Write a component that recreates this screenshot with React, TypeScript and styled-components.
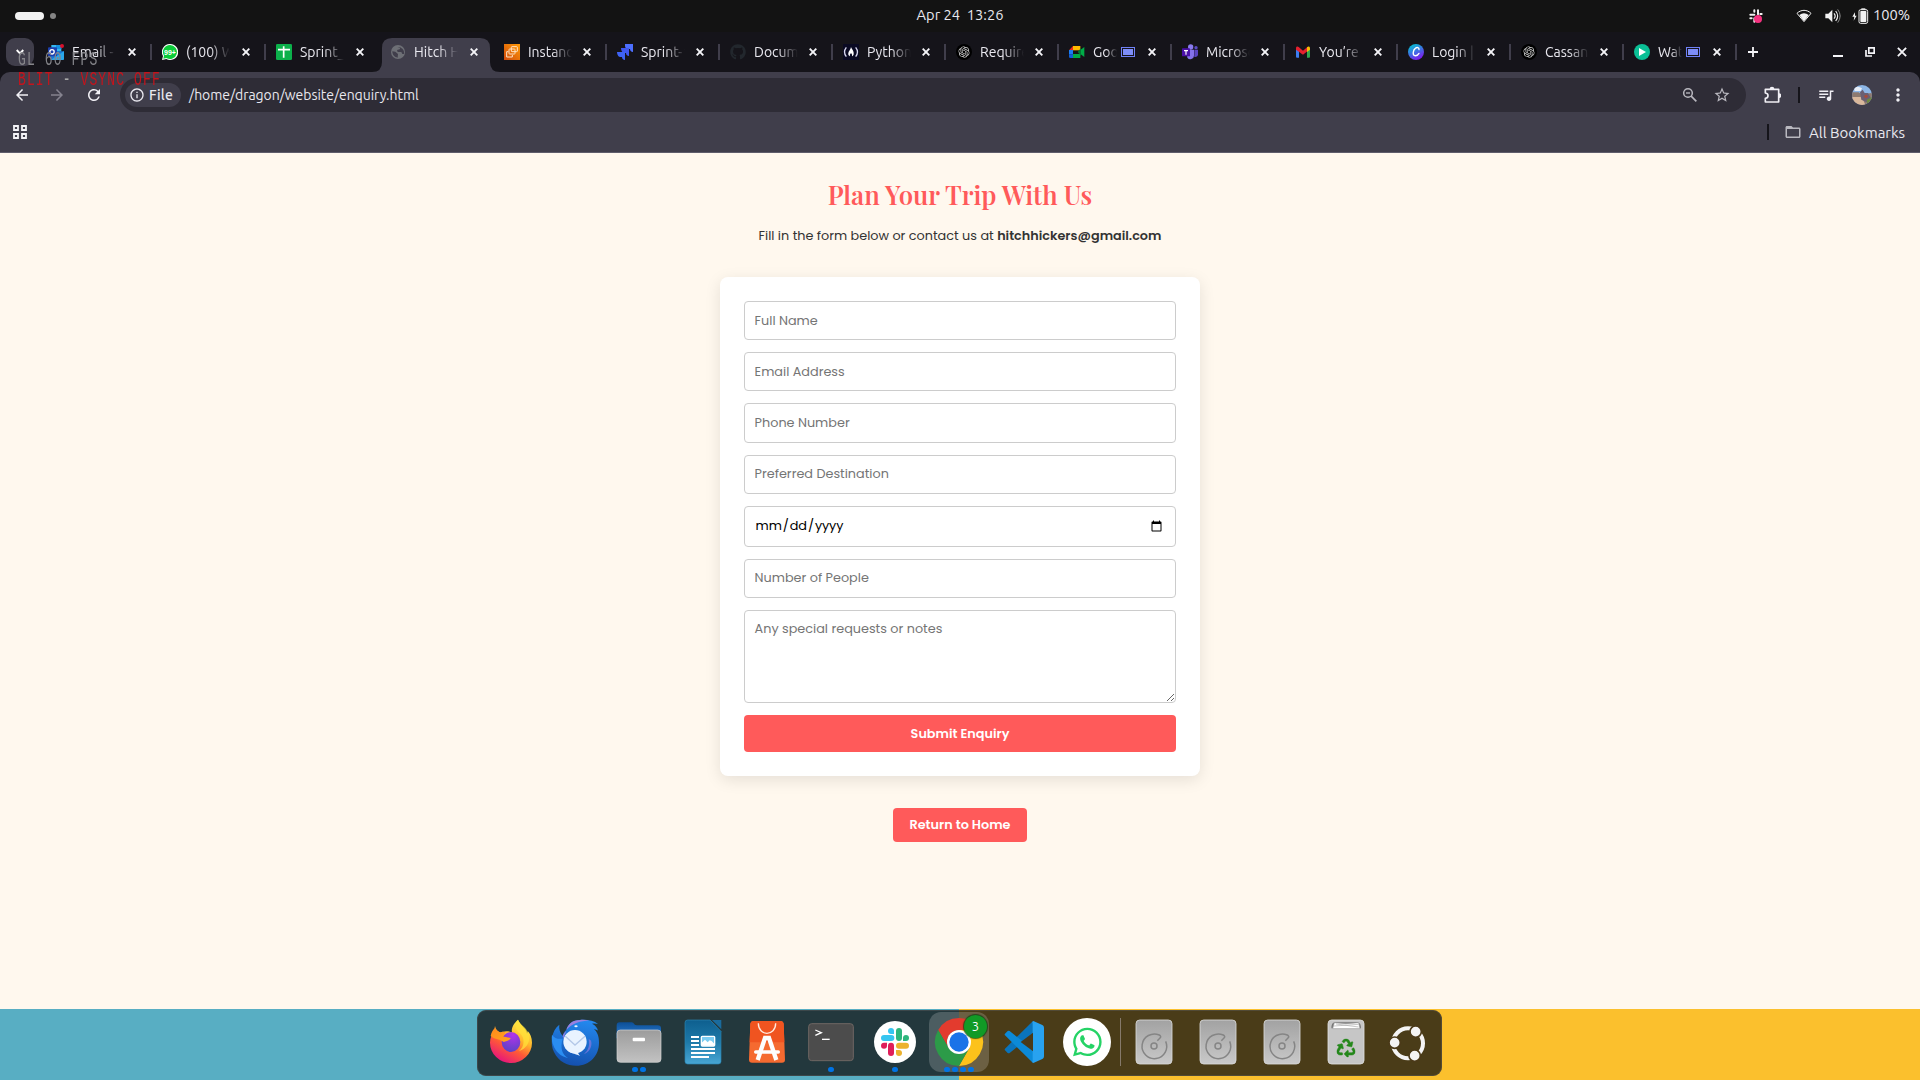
import React from "react";
import styled, { createGlobalStyle } from "styled-components";
import {
  MdArrowBack,
  MdArrowForward,
  MdRefresh,
  MdStarOutline,
  MdMoreVert,
  MdQueueMusic,
  MdInfoOutline,
  MdFolderOpen,
} from "react-icons/md";
import { FaGithub, FaWhatsapp, FaRecycle } from "react-icons/fa";
import { SiOpenai } from "react-icons/si";

const c = {
  panel: "#131313",
  strip: "#15141a",
  toolbar: "#403e4b",
  field: "#2e2c36",
  text: "#e9e8ef",
  page: "#fff8ee",
  coral: "#ff5a5a",
  teal: "#58aec3",
  yellow: "#fbc02d",
  dot: "#0073e5",
};

const uiFont = `Ubuntu, "Noto Sans", "Open Sans", sans-serif`;
const bodyFont = `Poppins, Inter, "Open Sans", sans-serif`;

const GlobalStyle = createGlobalStyle`
  * { box-sizing: border-box; }
  body { margin: 0; overflow: hidden; background: ${c.page}; }
  svg { display: block; flex: none; }
`;

const Screen = styled.div`
  width: 1920px;
  height: 1080px;
  display: flex;
  flex-direction: column;
  position: relative;
  font-family: ${uiFont};
  color: ${c.text};
`;

/* ---------- desktop panel ---------- */

const TopBar = styled.header`
  height: 32px;
  background: ${c.panel};
  display: grid;
  grid-template-columns: 1fr auto 1fr;
  align-items: center;
`;
const Workspaces = styled.div`
  display: flex;
  align-items: center;
  gap: 6px;
  padding-left: 15px;
`;
const ActiveWorkspace = styled.span`
  width: 29px;
  height: 8px;
  border-radius: 4px;
  background: #f2f2f2;
`;
const IdleWorkspace = styled.span`
  width: 6px;
  height: 6px;
  border-radius: 50%;
  background: #858585;
`;
const Clock = styled.div`
  font-size: 14.67px;
  line-height: 20px;
  white-space: pre;
  padding-bottom: 2px;
`;
const Status = styled.div`
  display: flex;
  justify-content: flex-end;
  align-items: center;
  height: 32px;
  padding-right: 11px;
`;
const TrayIcon = styled.span<{ $gap: number }>`
  display: flex;
  margin-right: ${(p) => p.$gap}px;
`;
const Percent = styled.span`
  width: 36px;
  font-size: 14.67px;
  line-height: 18px;
  padding-bottom: 2px;
  white-space: nowrap;
`;

/* ---------- tab strip ---------- */

const Browser = styled.div`
  background: ${c.strip};
`;
const Strip = styled.div`
  height: 40px;
  display: flex;
  align-items: center;
`;
const TabSearch = styled.button`
  width: 28px;
  height: 28px;
  margin: 0 4px 0 6px;
  padding: 0;
  border: 0;
  border-radius: 9px;
  background: ${c.toolbar};
  display: grid;
  place-items: center;
`;
const Tab = styled.div<{ $w: number; $line: boolean }>`
  width: ${(p) => p.$w}px;
  height: 40px;
  flex: none;
  display: flex;
  align-items: center;
  padding-left: 10px;
  position: relative;
  isolation: isolate;
  &::after {
    content: "";
    width: 2px;
    height: 16px;
    background: ${(p) => (p.$line ? c.toolbar : "transparent")};
  }
`;
const ActiveShape = styled.svg`
  position: absolute;
  left: -8px;
  bottom: 0;
  z-index: -1;
`;
const TabTitle = styled.span<{ $w: number }>`
  width: ${(p) => p.$w}px;
  margin-left: 8px;
  overflow: hidden;
  white-space: nowrap;
  font-size: 14px;
  line-height: 20px;
  -webkit-mask-image: linear-gradient(90deg, #000 55%, transparent 100%);
  mask-image: linear-gradient(90deg, #000 55%, transparent 100%);
`;
const TabShare = styled.span`
  width: 14px;
  height: 10px;
  margin-left: 4px;
  border: 1px solid #6f80f5;
  padding: 2px;
  &::before {
    content: "";
    display: block;
    height: 4px;
    background: #7d8df8;
    outline: 0.5px solid #7d8df8;
  }
`;
const TabClose = styled.span`
  margin-left: auto;
  margin-right: 14px;
  display: flex;
`;
const NewTab = styled.span`
  margin-left: 11px;
  display: flex;
`;
const WindowControls = styled.div`
  margin-left: auto;
  display: flex;
  align-items: center;
  gap: 22px;
  padding-right: 13px;
`;

/* ---------- toolbar ---------- */

const Toolbar = styled.div`
  background: ${c.toolbar};
  border-radius: 10px 10px 0 0;
  border-bottom: 1px solid #5f5d6b;
  height: 81px;
`;
const NavRow = styled.div`
  height: 46px;
  display: flex;
  align-items: center;
  padding-left: 13px;
`;
const NavButton = styled.span<{ $dim?: boolean; $gap: number; $before?: number }>`
  display: flex;
  color: ${(p) => (p.$dim ? "#85838f" : "#f1f0f5")};
  margin-left: ${(p) => p.$before ?? 0}px;
  margin-right: ${(p) => p.$gap}px;
`;
const AddressBar = styled.div`
  width: 1626px;
  height: 34px;
  border-radius: 17px;
  background: ${c.field};
  display: flex;
  align-items: center;
  padding: 0 15px 0 5px;
`;
const FileChip = styled.span`
  width: 56px;
  height: 24px;
  border-radius: 12px;
  background: ${c.toolbar};
  display: flex;
  align-items: center;
  gap: 4px;
  padding-left: 4px;
  font-size: 14px;
  font-weight: 500;
  letter-spacing: 0.3px;
`;
const Path = styled.span`
  margin-left: 8px;
  font-size: 14px;
  letter-spacing: -0.04px;
`;
const AddressActions = styled.span`
  margin-left: auto;
  display: flex;
  align-items: center;
  gap: 15px;
  color: #b9b8bf;
`;
const Divider = styled.span<{ $gap: number }>`
  width: 2px;
  height: 16px;
  background: ${c.strip};
  margin-right: ${(p) => p.$gap}px;
`;
const Avatar = styled.span`
  width: 20px;
  height: 20px;
  border-radius: 50%;
  overflow: hidden;
  margin-right: 26px;
`;
const BookmarkRow = styled.div`
  height: 28px;
  display: flex;
  align-items: center;
  padding: 0 15px 0 13px;
`;
const AllBookmarks = styled.div`
  margin-left: auto;
  display: flex;
  align-items: center;
  font-size: 15px;
  gap: 7px;
`;
const BookmarkLabel = styled.span`
  width: 96px;
  white-space: nowrap;
`;

/* ---------- page ---------- */

const Page = styled.main`
  height: 856px;
  background: ${c.page};
  display: flex;
  flex-direction: column;
  align-items: center;
  padding-top: 24px;
  font-family: ${bodyFont};
`;
const Heading = styled.h2`
  margin: 0;
  height: 38px;
  font-family: "Playfair Display", "Liberation Serif", serif;
  font-weight: 600;
  font-size: 25.6px;
  line-height: 34px;
  color: ${c.coral};
`;
const Lead = styled.p`
  margin: 11px 0 0;
  height: 19px;
  font-size: 12.8px;
  line-height: 19px;
  color: #333;
`;
const Email = styled.strong`
  font-weight: 600;
`;
const Card = styled.form`
  width: 480px;
  margin: 32px 0 0;
  padding: 24px;
  border-radius: 8px;
  background: #fff;
  box-shadow: 0 4px 16px rgba(0, 0, 0, 0.1);
  display: flex;
  flex-direction: column;
  gap: 12px;
`;
const Input = styled.input`
  width: 100%;
  height: ${(p) => (p.type === "date" ? 41 : 39.2)}px;
  padding: 0 9.6px;
  border: 1px solid #ccc;
  border-radius: 4px;
  background: #fff;
  font-family: ${bodyFont};
  font-size: 12.8px;
  letter-spacing: ${(p) => (p.type === "date" ? "-0.1px" : "normal")};
  color: #000;
  outline: none;
  &::placeholder { color: #757575; }
  &::-webkit-calendar-picker-indicator { width: 13.5px; height: 13.5px; }
`;
const Notes = styled.textarea`
  width: 100%;
  height: 93px;
  padding: 8px 9.6px;
  border: 1px solid #ccc;
  border-radius: 4px;
  background: #fff;
  font-family: ${bodyFont};
  font-size: 12.8px;
  line-height: 19px;
  resize: vertical;
  outline: none;
  &::placeholder { color: #757575; }
`;
const Submit = styled.button`
  height: 37px;
  border: 0;
  padding: 1px 0 0;
  border-radius: 4px;
  background: ${c.coral};
  color: #fff;
  font-family: ${bodyFont};
  font-weight: 600;
  font-size: 12.8px;
`;
const HomeLink = styled.a`
  width: 134px;
  height: 34px;
  margin-top: 32px;
  border-radius: 4px;
  background: ${c.coral};
  color: #fff;
  font-weight: 600;
  font-size: 12.8px;
  line-height: 34px;
  text-align: center;
  white-space: nowrap;
`;

/* ---------- dock ---------- */

const Desktop = styled.footer`
  height: 71px;
  display: flex;
  justify-content: center;
  align-items: flex-start;
  padding-top: 1px;
  background: linear-gradient(90deg, ${c.teal} 959px, ${c.yellow} 959px);
`;
const Dock = styled.div`
  width: 965px;
  height: 66px;
  margin-right: 1px;
  border-radius: 9px;
  background: rgba(19, 19, 19, 0.76);
  box-shadow: inset 0 0 0 1px rgba(90, 90, 90, 0.45);
  display: flex;
  padding-left: 2px;
`;
const DockItem = styled.div`
  width: 64px;
  height: 66px;
  position: relative;
`;
const DockDivider = styled.span`
  width: 1px;
  height: 48px;
  margin: 8px 1px;
  background: #85796a;
`;
const Dots = styled.span`
  position: absolute;
  left: 0;
  right: 0;
  top: 56.5px;
  display: flex;
  justify-content: center;
  gap: 2.5px;
`;
const Dot = styled.i`
  width: 5.6px;
  height: 5.6px;
  border-radius: 50%;
  background: ${c.dot};
`;
const Badge = styled.span`
  position: absolute;
  left: 37px;
  top: 5px;
  width: 23px;
  height: 23px;
  border-radius: 50%;
  background: #119a26;
  box-shadow: 0 0 1px 1px rgba(5, 60, 10, 0.7);
  color: #fff;
  font-size: 13px;
  line-height: 23px;
  text-align: center;
`;

/* ---------- overlay ---------- */

const Overlay = styled.div`
  position: absolute;
  left: 18px;
  top: 50px;
  font-family: "Liberation Mono", monospace;
  font-size: 21px;
  line-height: 20px;
  letter-spacing: 1.8px;
  white-space: pre;
  transform: scaleX(0.62);
  transform-origin: 0 0;
`;
const OverlayLine = styled.div<{ $color: string }>`
  color: ${(p) => p.$color};
`;
const OverlayDash = styled.span`
  color: #a8a8a8;
`;

/* ---------- small drawings ---------- */

const CloseX = ({ s = 8, w = 1.9 }: { s?: number; w?: number }) => (
  <svg width={s} height={s} viewBox="0 0 8 8">
    <path d="M.7.7l6.6 6.6M7.3.7L.7 7.3" stroke="#f4f4f8" strokeWidth={w} />
  </svg>
);

const ZoomOut = () => (
  <svg width="16" height="16" viewBox="0 0 48 48" fill="none" stroke="currentColor">
    <circle cx="18" cy="18" r="13" strokeWidth="4.500" />
    <path d="M27.500 27.500L43 43" strokeWidth="5" />
    <path d="M12 18h12" strokeWidth="4" />
  </svg>
);

const Puzzle = () => (
  <svg width="18" height="18" viewBox="0 0 54 54">
    <path
      d="M7 10h40v38H7V37q8-1 8-8t-8-8z"
      fill="none"
      stroke="currentColor"
      strokeWidth="5"
      strokeLinejoin="round"
    />
    <path d="M20 9a7 7 0 0 1 14 0zM48 22a7 7 0 0 1 0 14z" fill="currentColor" />
  </svg>
);

const Fav = ({ children }: { children: React.ReactNode }) => (
  <svg width="16" height="16" viewBox="0 0 48 48">
    {children}
  </svg>
);

const favicons: Record<string, React.ReactNode> = {
  outlook: (
    <Fav>
      <path d="M10 3h30v20H10z" fill="#35b8f1" />
      <path d="M24 3h16v12H24z" fill="#1490df" />
      <path d="M7 22h41v22a4 4 0 0 1-4 4H11a4 4 0 0 1-4-4z" fill="#1a77d4" />
      <path d="M48 22L8 48h36a4 4 0 0 0 4-4z" fill="#2aa7ea" />
      <rect x="0" y="10" width="27" height="27" rx="3" fill="#1c3fae" />
      <circle cx="12" cy="23.500" r="6.500" fill="none" stroke="#fff" strokeWidth="4" />
      <circle cx="42" cy="6" r="6" fill="#d9102b" />
    </Fav>
  ),
  whatsapp: (
    <Fav>
      <path d="M24 0a24 24 0 1 1-11 45L0 48l3-12A24 24 0 0 1 24 0z" fill="#fff" />
      <path d="M24 3a21 21 0 1 1-11 39l-9 2 2-9A21 21 0 0 1 24 3z" fill="#0ccb3a" />
      <text x="24" y="32" textAnchor="middle" fontSize="21" fontWeight="700" fill="#fff" fontFamily="Liberation Sans, sans-serif">
        99+
      </text>
    </Fav>
  ),
  sheets: (
    <Fav>
      <rect width="48" height="48" rx="4" fill="#0cb14b" />
      <path d="M6 17h36M23 7v34" stroke="#fff" strokeWidth="5" />
    </Fav>
  ),
  globe: (
    <Fav>
      <circle cx="24" cy="24" r="21" fill="#6d6f75" />
      <path d="M7 22l9 1 8 7-1 11C13 40 7 32 7 22zM22 10l10-1-3 7-8 2 2 6 11 0 3 6 5 0q2-14-10-19z" fill="#403e4b" />
    </Fav>
  ),
  ec2: (
    <Fav>
      <defs>
        <linearGradient id="ec2" x1="0" y1="1" x2="1" y2="0">
          <stop stopColor="#d14a0c" />
          <stop offset="1" stopColor="#ff9a06" />
        </linearGradient>
      </defs>
      <rect width="48" height="48" fill="url(#ec2)" />
      <g fill="none" stroke="#ffe3c4" strokeWidth="3">
        <rect x="22" y="8" width="18" height="15" rx="2" />
        <rect x="15" y="15" width="18" height="15" rx="2" />
        <path d="M13 23H8v16h17v-6" />
      </g>
    </Fav>
  ),
  jira: (
    <Fav>
      <path d="M24 0h24v24c-6 0-9-4-9-9h-6c-5 0-9-4-9-9z" fill="#4c6fff" />
      <path d="M12 12h24v24c-6 0-9-4-9-9h-6c-5 0-9-9-9-15z" fill="#3f57f0" />
      <path d="M0 24h24v24c-6 0-9-4-9-9h-6c-5 0-9-9-9-15z" fill="#3e63f5" />
    </Fav>
  ),
  github: <FaGithub size={16} color="#22272d" />,
  fcc: (
    <Fav>
      <rect width="48" height="48" fill="#0a0a23" />
      <path d="M10 10C3 19 3 29 10 38M38 10c7 9 7 19 0 28" fill="none" stroke="#d8d8f0" strokeWidth="4" />
      <path d="M24 9c2 7 9 11 8 20 0 4-2 6-5 8 1-5-1-8-3-9-3 2-4 5-3 9-4-2-6-5-5-10 1-6 7-10 8-18z" fill="#fff" />
    </Fav>
  ),
  openai: (
    <Fav>
      <circle cx="24" cy="24" r="24" fill="#000" />
      <SiOpenai x={7} y={7} size={34} color="#d9d9d9" />
    </Fav>
  ),
  meet: (
    <Fav>
      <path d="M12 6v13H0z" fill="#ea2a1d" />
      <path d="M12 6h22v13H12z" fill="#ffba00" />
      <path d="M0 18h12v13H0z" fill="#1b7cf2" />
      <path d="M0 31h12v11H4a4 4 0 0 1-4-4z" fill="#0f5fd8" />
      <path d="M12 30h22v12H12z" fill="#00ac47" />
      <path d="M34 18L46 9v30L34 30z" fill="#00ac47" />
      <path d="M26 24l10-12v24z" fill="#007a32" />
    </Fav>
  ),
  teams: (
    <Fav>
      <circle cx="26" cy="9" r="8" fill="#8a7bf0" />
      <circle cx="42" cy="11" r="5" fill="#5b4bc4" />
      <path d="M14 17h22v18a11 11 0 0 1-20 6z" fill="#8472ea" />
      <path d="M37 17h11v14c0 7-5 9-11 8z" fill="#5a44c2" />
      <rect x="0" y="13" width="24" height="24" rx="2" fill="#4a10a8" />
      <path d="M6 20h12M12 20v12" stroke="#fff" strokeWidth="3.500" />
    </Fav>
  ),
  gmail: (
    <Fav>
      <path d="M3 12h9v29H6a3 3 0 0 1-3-3z" fill="#3b7cf0" />
      <path d="M36 12h9v26a3 3 0 0 1-3 3h-6z" fill="#2ea84f" />
      <path d="M3 12c0-5 5-6 8-3l13 11L37 9v13L24 32 3 17z" fill="#e5202e" />
      <path d="M36 10c4-4 9-2 9 3v4l-9 7z" fill="#fbbc04" />
    </Fav>
  ),
  canva: (
    <Fav>
      <defs>
        <linearGradient id="canva" x1="0.200" y1="0" x2="0.700" y2="1">
          <stop stopColor="#00c6d0" />
          <stop offset=".5" stopColor="#3f6fe4" />
          <stop offset="1" stopColor="#8410ee" />
        </linearGradient>
      </defs>
      <circle cx="24" cy="24" r="24" fill="url(#canva)" />
      <path d="M33 17c1-7-6-8-11-4-7 5-9 20-2 22 5 1 10-2 13-7" fill="none" stroke="#fff" strokeWidth="4" strokeLinecap="round" />
    </Fav>
  ),
  play: (
    <Fav>
      <circle cx="24" cy="24" r="24" fill="#0abf95" />
      <path d="M15 12l21 12-21 12z" fill="#fff" />
    </Fav>
  ),
};

interface TabInfo {
  icon: string;
  title: string;
  active?: boolean;
  share?: boolean;
}

const tabs: TabInfo[] = [
  { icon: "outlook", title: "Email - D" },
  { icon: "whatsapp", title: "(100) Wh" },
  { icon: "sheets", title: "Sprint_B" },
  { icon: "globe", title: "Hitch Hi", active: true },
  { icon: "ec2", title: "Instance" },
  { icon: "jira", title: "Sprint-1" },
  { icon: "github", title: "Docume" },
  { icon: "fcc", title: "Python P" },
  { icon: "openai", title: "Require" },
  { icon: "meet", title: "Goog", share: true },
  { icon: "teams", title: "Microso" },
  { icon: "gmail", title: "You’re in" },
  { icon: "canva", title: "Login | " },
  { icon: "openai", title: "Cassand" },
  { icon: "play", title: "Wat", share: true },
];

/* ---------- dock drawings ---------- */

const DockSvg = ({ x, children }: { x: number; children: React.ReactNode }) => (
  <svg width="64" height="66" viewBox={`${x} 30 192 198`}>
    {children}
  </svg>
);

const Firefox = () => (
  <DockSvg x={27}>
    <defs>
      <linearGradient id="ffBody" x1=".8" y1=".1" x2=".3" y2="1">
        <stop stopColor="#fff04a" />
        <stop offset=".35" stopColor="#ffb52b" />
        <stop offset=".62" stopColor="#ff5a36" />
        <stop offset="1" stopColor="#e6127f" />
      </linearGradient>
      <radialGradient id="ffGlobe" cx=".6" cy=".15" r=".9">
        <stop stopColor="#b233ea" />
        <stop offset="1" stopColor="#5843c4" />
      </radialGradient>
      <linearGradient id="ffFace" x1="0" y1="0" x2="1" y2="1">
        <stop stopColor="#ff8a1c" />
        <stop offset="1" stopColor="#ffa41e" />
      </linearGradient>
    </defs>
    <path
      d="M75 78c-2 8-1 12 0 14-10 10-15 22-15 36a63 61 0 0 0 126 0c0-16-6-28-13-35 0 5-1 7-2 8-3-17-18-22-27-42-7 5-22 23-18 38-17-7-30-2-35 1-7-4-14-9-16-20z"
      fill="url(#ffBody)"
    />
    <ellipse cx="123" cy="126" rx="28" ry="30" fill="url(#ffGlobe)" />
    <path d="M62 108c2-12 8-20 13-24 4 8 10 11 16 13 5-2 10-2 14 0 0 5-3 9-7 12 6 2 14 3 24 5-3 9-15 8-21 12-4-2-10-6-18-8-7-2-14-4-21-10z" fill="url(#ffFace)" />
    <path d="M144 59c-14 16-4 35 7 42 14 12 13 40-4 52 26-7 40-37 24-60-3-12-20-17-27-34z" fill="#ffe03a" opacity=".75" />
  </DockSvg>
);

const Thunderbird = () => (
  <DockSvg x={219}>
    <defs>
      <linearGradient id="tb" x1=".6" y1="0" x2=".4" y2="1">
        <stop stopColor="#2388ee" />
        <stop offset="1" stopColor="#1450ae" />
      </linearGradient>
    </defs>
    <path
      d="M268 74C244 92 240 130 252 156 266 186 292 197 318 197c42 0 69-31 69-69 0-20-5-32-15-40 4 0 8 2 12 4-2-10-8-16-18-21 6-1 12-1 18 1-12-10-34-14-54-12-22 0-36 12-41 30-5 4-9 10-11 18-8-10-12-22-10-34z"
      fill="url(#tb)"
    />
    <path d="M246 104c-2 12 0 22 4 32 6 18 22 34 44 38-18-12-24-30-16-58-14 2-26-2-32-12z" fill="#2a8df2" />
    <path d="M289 90c5-18 19-30 41-30 10-1 20 0 28 2-26 0-50 6-69 28z" fill="#9a80e0" />
    <path d="M278 108c2-6 6-12 11-15-3 8-7 14-9 24z" fill="#8f7ade" />
    <circle cx="315" cy="125" r="35" fill="#e9f3ff" />
    <path d="M286 109l29 26 30-26" fill="none" stroke="#b4c8e8" strokeWidth="4" />
    <path d="M290 148c10 14 24 12 40 20-8-10-8-14-2-20z" fill="#e9f3ff" />
    <path d="M356 118c4 20-2 34-14 44 16-6 24-20 22-36-1-5-4-8-8-8z" fill="#7a78dc" opacity=".8" />
    <ellipse cx="318" cy="79" rx="5" ry="3" fill="#e8f4ff" />
  </DockSvg>
);

const Files = () => (
  <DockSvg x={411}>
    <defs>
      <linearGradient id="fi" x1="0" y1="0" x2="0" y2="1">
        <stop stopColor="#9c9c9c" />
        <stop offset="1" stopColor="#c2c2c2" />
      </linearGradient>
      <linearGradient id="fb" x1="0" y1="0" x2="0" y2="1">
        <stop stopColor="#0d4f96" />
        <stop offset="1" stopColor="#2b80d8" />
      </linearGradient>
    </defs>
    <path d="M440 76q0-9 9-9h36q5 0 8 6 2 3 8 3h62q10 0 10 9v30H440z" fill="url(#fb)" />
    <rect x="441" y="90" width="132" height="97" rx="10" fill="url(#fi)" stroke="#d8d8d8" strokeWidth="2" />
    <rect x="488" y="113" width="37" height="11" rx="3" fill="#fff" />
  </DockSvg>
);

const Writer = () => (
  <DockSvg x={603}>
    <defs>
      <linearGradient id="wr" x1="0" y1="0" x2="0" y2="1">
        <stop stopColor="#0e5f8f" />
        <stop offset=".5" stopColor="#1d79a8" />
        <stop offset="1" stopColor="#48a6d4" />
      </linearGradient>
    </defs>
    <path d="M653 60h67l33 34v90q0 8-8 8h-92q-8 0-8-8V68q0-8 8-8z" fill="url(#wr)" stroke="#2b86b4" strokeWidth="2" />
    <path d="M726 60h28v28z" fill="#1a6b9d" />
    <path d="M663 111h24M663 123h24M663 135h24M663 147h72M663 159h72M663 171h54" stroke="#fff" strokeWidth="6" />
    <rect x="694" y="109" width="40" height="29" rx="3" fill="#7ccdf2" stroke="#fff" strokeWidth="4" />
    <path d="M695 137v-9l10-9 8 8 6-6 6 2 8 8v6z" fill="#fff" />
  </DockSvg>
);

const AppCenter = () => (
  <DockSvg x={795}>
    <path d="M851 63h80q9 0 10 9l4 107q0 9-9 9h-90q-9 0-9-9l4-107q1-9 10-9z" fill="#f56a30" />
    <path d="M851 63h80q9 0 10 9l2 55H839l2-55q1-9 10-9z" fill="#f05420" />
    <path d="M865 70c0 40 52 40 52 0" fill="none" stroke="#ffe9de" strokeWidth="4" />
    <path d="M863 180l22-66h12l22 66" fill="none" stroke="#fdfdfd" strokeWidth="13" />
    <path d="M857 156h68" stroke="#fdfdfd" strokeWidth="10" strokeLinecap="round" />
  </DockSvg>
);

const Terminal = () => (
  <DockSvg x={27}>
    <rect x="56" y="71" width="134" height="111" rx="9" fill="#4c4c4c" stroke="#6e6663" strokeWidth="3" />
    <path d="M76 90l18 8-18 8" fill="none" stroke="#fff" strokeWidth="4" />
    <path d="M96 118h23" stroke="#fff" strokeWidth="4" />
  </DockSvg>
);

const Slack = () => (
  <DockSvg x={219}>
    <circle cx="315" cy="126" r="63" fill="#fff" />
    <g fill="#36c5f0">
      <rect x="273" y="105" width="40" height="18" rx="9" />
      <path d="M312 102h-9a9 9 0 1 1 9-9z" />
    </g>
    <g fill="#2eb67d">
      <rect x="318" y="84" width="18" height="39" rx="9" />
      <path d="M339 123v-9a9 9 0 1 1 9 9z" />
    </g>
    <g fill="#ecb22e">
      <rect x="318" y="128" width="39" height="18" rx="9" />
      <path d="M318 150h9a9 9 0 1 1-9 9z" />
    </g>
    <g fill="#e01e5a">
      <rect x="294" y="128" width="18" height="40" rx="9" />
      <path d="M291 128v9a9 9 0 1 1-9-9z" />
    </g>
  </DockSvg>
);

const Chrome = () => (
  <DockSvg x={411}>
    <rect x="417" y="36" width="180" height="180" rx="36" fill="#fff" opacity=".19" />
    <path d="M507 90h62.400A72 72 0 0 1 507 198l31-54z" fill="#fcc21b" />
    <path d="M444.600 90A72 72 0 0 1 569.400 90H507a36 36 0 0 0-31 54z" fill="#e33b2e" />
    <path d="M444.600 90A72 72 0 0 0 507 198l31-54a36 36 0 0 1-62 0z" fill="#2c9b48" />
    <circle cx="507" cy="126" r="36" fill="#fff" />
    <circle cx="507" cy="126" r="29" fill="#1a73e8" />
  </DockSvg>
);

const VSCode = () => (
  <DockSvg x={603}>
    <path d="M729 63l-84 83q-2 3 0 5l8 8q3 2 6 0l75-60z" fill="#0a74bc" />
    <path d="M729 189l-84-83q-2-3 0-5l8-8q3-2 6 0l75 60z" fill="#0c8ad8" />
    <path d="M730 63l27 12q5 2 5 8v86q0 6-5 8l-27 12q-5-2-2-8V71q-3-6 2-8z" fill="#28a2f0" />
    <path d="M729 98v56l-37-28z" fill="#4b3a19" />
  </DockSvg>
);

const WhatsApp = () => (
  <DockSvg x={795}>
    <circle cx="891" cy="126" r="72" fill="#fff" />
    <FaWhatsapp x={843} y={77} size={98} color="#25d366" />
  </DockSvg>
);

const Disk = () => (
  <DockSvg x={36}>
    <defs>
      <linearGradient id="dk" x1="0" y1="0" x2="0" y2="1">
        <stop stopColor="#a2a2a2" />
        <stop offset="1" stopColor="#c9c9c9" />
      </linearGradient>
    </defs>
    <rect x="78" y="60" width="108" height="132" rx="11" fill="url(#dk)" stroke="#dadada" strokeWidth="2.500" />
    <g fill="none" stroke="#858585" strokeWidth="4.500">
      <path d="M167 124A37 37 0 1 1 148 105q7 4 2 9l-8 8" />
      <circle cx="132" cy="138" r="9" />
    </g>
  </DockSvg>
);

const Trash = () => (
  <DockSvg x={612}>
    <rect x="654" y="60" width="108" height="132" rx="11" fill="#c6c6c6" stroke="#dedede" strokeWidth="2.500" />
    <path d="M664 85q0-16 9-18h70q10 2 10 18z" fill="#777" />
    <path d="M668 86l5-18 35 3 38-3 4 18z" fill="#fff" stroke="#999" strokeWidth="2" />
    <path d="M672 78l74-5M678 72l68 9" stroke="#aaa" strokeWidth="2" />
    <FaRecycle x={680} y={116} size={56} color="#25881b" stroke="#25881b" strokeWidth={14} />
  </DockSvg>
);

const Ubuntu = () => (
  <DockSvg x={804}>
    <circle cx="894" cy="130" r="45" fill="none" stroke="#f4f4f4" strokeWidth="12" />
    <g fill="#f4f4f4" stroke="#4b3a19" strokeWidth="5">
      <circle cx="854" cy="128" r="17" />
      <circle cx="917" cy="95" r="17" />
      <circle cx="914" cy="167" r="17" />
    </g>
  </DockSvg>
);

interface DockEntry {
  art: React.ReactNode;
  windows?: number;
  badge?: string;
}

const apps: DockEntry[] = [
  { art: <Firefox /> },
  { art: <Thunderbird /> },
  { art: <Files />, windows: 2 },
  { art: <Writer /> },
  { art: <AppCenter /> },
  { art: <Terminal />, windows: 1 },
  { art: <Slack />, windows: 1 },
  { art: <Chrome />, windows: 4, badge: "3" },
  { art: <VSCode /> },
  { art: <WhatsApp /> },
];
const places: DockEntry[] = [
  { art: <Disk /> },
  { art: <Disk /> },
  { art: <Disk /> },
  { art: <Trash /> },
  { art: <Ubuntu /> },
];

const DockCell = ({ art, windows = 0, badge }: DockEntry) => (
  <DockItem>
    {art}
    {windows > 0 && (
      <Dots>
        {Array.from({ length: windows }, (_, i) => (
          <Dot key={i} />
        ))}
      </Dots>
    )}
    {badge && <Badge>{badge}</Badge>}
  </DockItem>
);

/* ---------- tray drawings ---------- */

const SlackTray = () => (
  <svg width="14" height="15" viewBox="0 0 42 45">
    <g stroke="#f2f2f2" strokeWidth="6" strokeLinecap="round">
      <path d="M4 17h12M16 4v4M27 4v12M34 15h4M4 28h4M16 28v10" />
    </g>
    <circle cx="27" cy="30" r="12" fill="#f5317f" />
  </svg>
);
const Wifi = () => (
  <svg width="16" height="14" viewBox="0 0 48 42">
    <path d="M3 13C15 1 33 1 45 13L24 38z" fill="none" stroke="#f2f2f2" strokeWidth="3" strokeLinejoin="round" />
    <path d="M10 18q14-10 28 0L24 37z" fill="#f2f2f2" />
  </svg>
);
const Volume = () => (
  <svg width="16" height="16" viewBox="0 0 48 48">
    <path d="M1 17h9l12-12v38L10 31H1z" fill="#f2f2f2" />
    <path d="M27 16q7 8 0 16M32 9q12 15 0 30" fill="none" stroke="#f2f2f2" strokeWidth="3.500" />
    <path d="M38 4q15 20 0 40" fill="none" stroke="#8a8a8a" strokeWidth="3" />
  </svg>
);
const Battery = () => (
  <svg width="17" height="16" viewBox="0 0 51 48">
    <path d="M9 13L1 26h6l-2 12 9-15H9z" fill="#f2f2f2" />
    <path d="M28 1h12v4H28z" fill="#f2f2f2" />
    <rect x="21" y="5" width="26" height="41" rx="5" fill="none" stroke="#f2f2f2" strokeWidth="3" />
    <rect x="25" y="9" width="18" height="33" rx="2" fill="#f2f2f2" />
  </svg>
);

const fields = [
  { type: "text", placeholder: "Full Name" },
  { type: "email", placeholder: "Email Address" },
  { type: "tel", placeholder: "Phone Number" },
  { type: "text", placeholder: "Preferred Destination" },
  { type: "date", placeholder: "" },
  { type: "number", placeholder: "Number of People" },
];

export default function App() {
  return (
    <Screen>
      <GlobalStyle />
      <TopBar>
        <Workspaces>
          <ActiveWorkspace />
          <IdleWorkspace />
        </Workspaces>
        <Clock>{"Apr 24  13:26"}</Clock>
        <Status>
          <TrayIcon $gap={33}><SlackTray /></TrayIcon>
          <TrayIcon $gap={13}><Wifi /></TrayIcon>
          <TrayIcon $gap={11}><Volume /></TrayIcon>
          <TrayIcon $gap={4}><Battery /></TrayIcon>
          <Percent>100%</Percent>
        </Status>
      </TopBar>

      <Browser>
        <Strip>
          <TabSearch>
            <svg width="8" height="6" viewBox="0 0 8 6">
              <path d="M.7 1L4 4.400 7.300 1" fill="none" stroke="#fff" strokeWidth="1.800" />
            </svg>
          </TabSearch>
          {tabs.map((t, i) => (
            <Tab key={i} $w={i < 4 ? 114 : 113} $line={!t.active && !tabs[i + 1]?.active}>
              {t.active && (
                <ActiveShape width="128" height="34" viewBox="0 0 128 34">
                  <path d="M0 34q10 0 10-10V10Q10 0 20 0h88q10 0 10 10v14q0 10 10 10z" fill={c.toolbar} />
                </ActiveShape>
              )}
              {favicons[t.icon]}
              <TabTitle $w={t.share ? 24 : 44}>{t.title}</TabTitle>
              {t.share && <TabShare />}
              <TabClose><CloseX /></TabClose>
            </Tab>
          ))}
          <NewTab>
            <svg width="10" height="10" viewBox="0 0 10 10">
              <path d="M5 0v10M0 5h10" stroke="#f4f4f8" strokeWidth="1.800" />
            </svg>
          </NewTab>
          <WindowControls>
            <svg width="10" height="10" viewBox="0 0 10 10">
              <path d="M0 9h10" stroke="#f4f4f8" strokeWidth="2" />
            </svg>
            <svg width="10" height="10" viewBox="0 0 10 10">
              <path d="M3.800.8h5.400v5.400H3.800zM1 3v6h6" fill="none" stroke="#f4f4f8" strokeWidth="1.700" />
            </svg>
            <CloseX s={10} w={1.5} />
          </WindowControls>
        </Strip>

        <Toolbar>
          <NavRow>
            <NavButton $gap={17}><MdArrowBack size={18} /></NavButton>
            <NavButton $gap={19} $dim><MdArrowForward size={18} /></NavButton>
            <NavButton $gap={17}><MdRefresh size={18} /></NavButton>
            <AddressBar>
              <FileChip>
                <MdInfoOutline size={16} />
                File
              </FileChip>
              <Path>/home/dragon/website/enquiry.html</Path>
              <AddressActions>
                <ZoomOut />
                <MdStarOutline size={18} />
              </AddressActions>
            </AddressBar>
            <NavButton $before={17} $gap={17}><Puzzle /></NavButton>
            <Divider $gap={17} />
            <NavButton $gap={17}><MdQueueMusic size={18} /></NavButton>
            <Avatar>
              <svg width="20" height="20" viewBox="0 0 60 60">
                <rect width="60" height="60" fill="#8db6e6" />
                <path d="M0 22l20 0 8 6 32-4v36H0z" fill="#8d7a70" />
                <path d="M0 36h30l10 24H0z" fill="#d9b89c" />
                <path d="M24 22l8-8 6 10 10 0 8 14-12 14-16-8z" fill="#6b5f72" />
                <path d="M6 8q12-6 24 2l-4 8-18 0z" fill="#e7edf6" />
                <circle cx="42" cy="34" r="5" fill="#a84a3a" />
                <path d="M44 44l16-8v16l-14 6z" fill="#6d8a3e" />
              </svg>
            </Avatar>
            <NavButton $before={-10} $gap={0}><MdMoreVert size={20} /></NavButton>
          </NavRow>
          <BookmarkRow>
            <svg width="14" height="14" viewBox="0 0 14 14">
              <path d="M1 1h4v4H1zM9 1h4v4H9zM1 9h4v4H1zM9 9h4v4H9z" fill="none" stroke="#f4f4f8" strokeWidth="1.800" />
            </svg>
            <AllBookmarks>
              <Divider $gap={8} />
              <MdFolderOpen size={18} color="#b9b8bf" />
              <BookmarkLabel>All Bookmarks</BookmarkLabel>
            </AllBookmarks>
          </BookmarkRow>
        </Toolbar>
      </Browser>

      <Page>
        <Heading>Plan Your Trip With Us</Heading>
        <Lead>
          Fill in the form below or contact us at <Email>hitchhickers@gmail.com</Email>
        </Lead>
        <Card>
          {fields.map((f, i) => (
            <Input key={i} type={f.type} placeholder={f.placeholder} />
          ))}
          <Notes placeholder="Any special requests or notes" />
          <Submit type="button">Submit Enquiry</Submit>
        </Card>
        <HomeLink>Return to Home</HomeLink>
      </Page>

      <Desktop>
        <Dock>
          {apps.map((a, i) => (
            <DockCell key={i} {...a} />
          ))}
          <DockDivider />
          {places.map((a, i) => (
            <DockCell key={i} {...a} />
          ))}
        </Dock>
      </Desktop>

      <Overlay>
        <OverlayLine $color="#85858a">GL 60 FPS</OverlayLine>
        <OverlayLine $color="#c4141c">
          BLIT <OverlayDash>-</OverlayDash> VSYNC OFF
        </OverlayLine>
      </Overlay>
    </Screen>
  );
}
